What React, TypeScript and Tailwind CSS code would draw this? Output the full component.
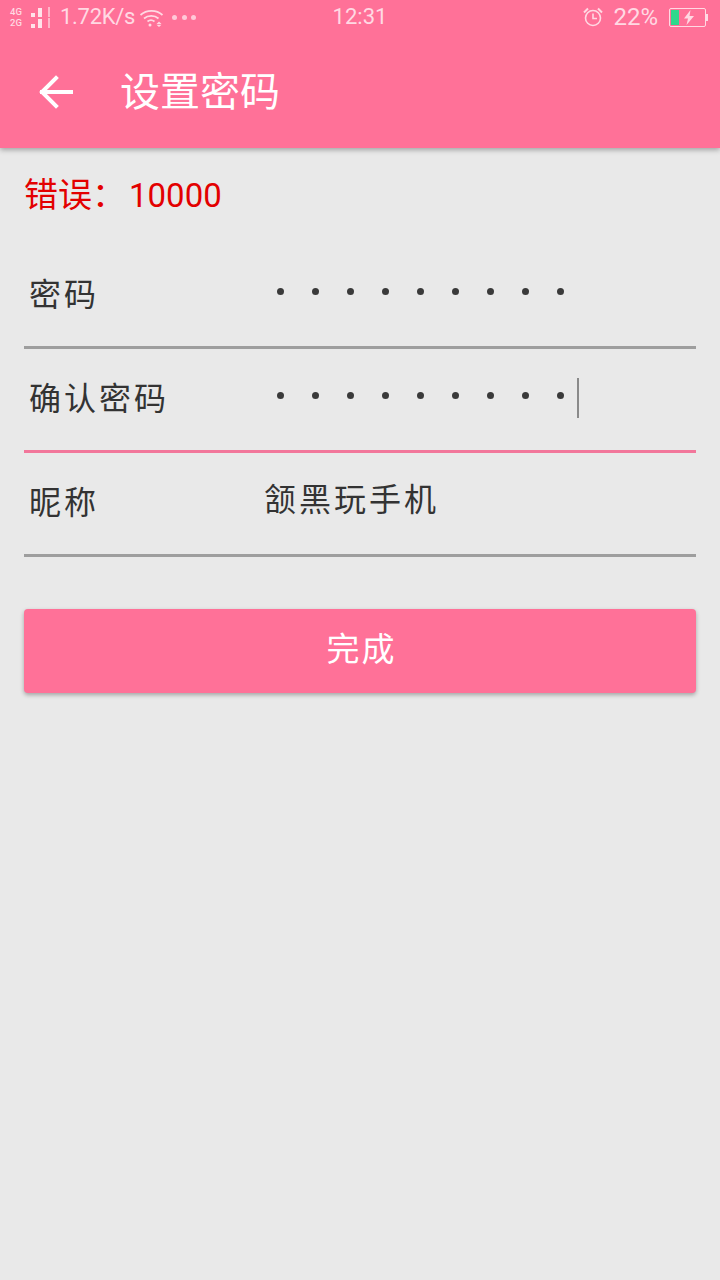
const cjk = "font-['Noto_Sans_CJK_SC','Noto_Sans',sans-serif]";

function SignalRow({ label }: { label: string }) {
  return (
    <div className="flex h-[11px] items-end">
      <span className="w-[21px] text-[9.5px] leading-[11px] font-medium font-['Roboto',sans-serif] text-[#ffd9e3]">{label}</span>
      <span className="h-[4px] w-[4px] bg-[#ffe3ea]" />
      <span className="ml-[3px] h-[9px] w-[4px] bg-[#ffe3ea]" />
      <span className="ml-[6px] h-[10px] w-[2px] bg-[#ffb6c9]" />
    </div>
  );
}

function StatusBar() {
  return (
    <div className="grid h-[34px] grid-cols-3 items-center text-[#ffd9e3] font-['Roboto',sans-serif]">
      <div className="flex items-center pl-[10px]">
        <div className="flex flex-col">
          <SignalRow label="4G" />
          <SignalRow label="2G" />
        </div>
        <span className="ml-[10px] text-[22px] leading-none tracking-[-0.3px] whitespace-nowrap">1.72K/s</span>
        <svg className="ml-[4px] shrink-0" width="26" height="20" viewBox="0 0 26 20" fill="none" stroke="#ffd9e3" strokeWidth="1.7">
          <path d="M1.5 8C7.5 2.5 17.5 2.500 23.500 8" />
          <path d="M5 11.500C9 8 15.500 8 19.500 11.500" />
          <path d="M8.500 14.500C10.500 13 13.500 13 15.500 14.500" />
          <circle cx="11" cy="18" r="1.500" fill="#ffd9e3" stroke="none" />
          <path d="M20 14.500l-2.500 2.500h5zM20 20l-2.500-2.300h5z" fill="#ffd9e3" stroke="none" />
        </svg>
        <div className="ml-[7px] flex gap-[4.500px]">
          <span className="h-[5px] w-[5px] rounded-full bg-[#ffc9d8]" />
          <span className="h-[5px] w-[5px] rounded-full bg-[#ffc9d8]" />
          <span className="h-[5px] w-[5px] rounded-full bg-[#ffc9d8]" />
        </div>
      </div>
      <div className="text-center text-[22px] leading-none">12:31</div>
      <div className="flex items-center justify-end pr-[12px]">
        <svg width="22" height="22" viewBox="0 0 22 22" fill="none" stroke="#ffd9e3" strokeWidth="1.600">
          <circle cx="11" cy="12" r="7.500" />
          <path d="M11 7.500V12.500H15" />
          <path d="M2 6.500L6 2.500M20 6.500L16 2.500" strokeWidth="2" />
        </svg>
        <span className="ml-[9px] text-[24px] leading-none">22%</span>
        <div className="ml-[11px] flex items-center">
          <div className="flex h-[19px] w-[37px] items-center rounded-[2px] border border-[#ffd9e3] p-[1px]">
            <span className="h-full w-[8px] bg-[#2fd98c]" />
            <svg className="ml-[4px]" width="12" height="15" viewBox="0 0 12 15">
              <path d="M7.500 0L1 8.500H5L3.500 15L11 6H6.500Z" fill="#ffd9e3" />
            </svg>
          </div>
          <span className="h-[7px] w-[2px] bg-[#ffd9e3]" />
        </div>
      </div>
    </div>
  );
}

function Dots() {
  const dots = [0, 1, 2, 3, 4, 5, 6, 7, 8];
  return (
    <div className="flex items-center gap-[28px] pl-[12px] pb-[2px]">
      {dots.map((d) => (
        <span key={d} className="h-[7px] w-[7px] rounded-full bg-[#3a3a3a]" />
      ))}
    </div>
  );
}

function Row({ label, active, children }: { label: string; active?: boolean; children: React.ReactNode }) {
  return (
    <div
      className={`flex h-[104px] items-center border-b-[3px] ${
        active ? "border-[#f2779b]" : "border-[#9e9e9e]"
      }`}
    >
      <div className="w-[241px] shrink-0 pb-[8px] pl-[5px] text-[32px] leading-none tracking-[3px] text-[#333333]">{label}</div>
      <div className="flex h-full items-center pb-[6px]">{children}</div>
    </div>
  );
}

export default function App() {
  return (
    <div className={`flex min-h-[1280px] flex-col bg-[#e9e9e9] ${cjk}`}>
      <header className="h-[148px] bg-[#ff7198] shadow-[0_2px_5px_rgba(0,0,0,0.3)]">
        <StatusBar />
        <div className="flex h-[114px] items-center pl-[39px]">
          <svg className="mt-[2px]" width="34" height="34" viewBox="0 0 34 34" fill="none" stroke="#ffffff" strokeWidth="4" strokeLinecap="square">
            <path d="M3 17H32" />
            <path d="M17 3L3 17L17 31" />
          </svg>
          <h1 className="ml-[47px] pb-[4px] text-[40px] leading-none text-white">设置密码</h1>
        </div>
      </header>

      <main className="px-[24px]">
        <div className="mt-[24px] h-[73px] text-[34px] leading-[42px] text-[#e30000]">
          错误：<span className="ml-[3px] text-[33px] font-['Roboto',sans-serif]">10000</span>
        </div>
        <Row label="密码">
          <Dots />
        </Row>
        <Row label="确认密码" active>
          <Dots />
          <span className="ml-[13px] mt-[2px] h-[40px] w-[2px] bg-[#8a8a8a]" />
        </Row>
        <Row label="昵称">
          <span className="pb-[8px] text-[32px] leading-none tracking-[3px] -ml-[1px] text-[#333333]">颔黑玩手机</span>
        </Row>
        <button className="mt-[52px] h-[84px] w-full rounded-[4px] bg-[#ff7198] pb-[8px] pl-[3px] text-[33px] leading-none tracking-[2px] text-white shadow-[0_2px_4px_rgba(0,0,0,0.3)]">
          完成
        </button>
      </main>
    </div>
  );
}
